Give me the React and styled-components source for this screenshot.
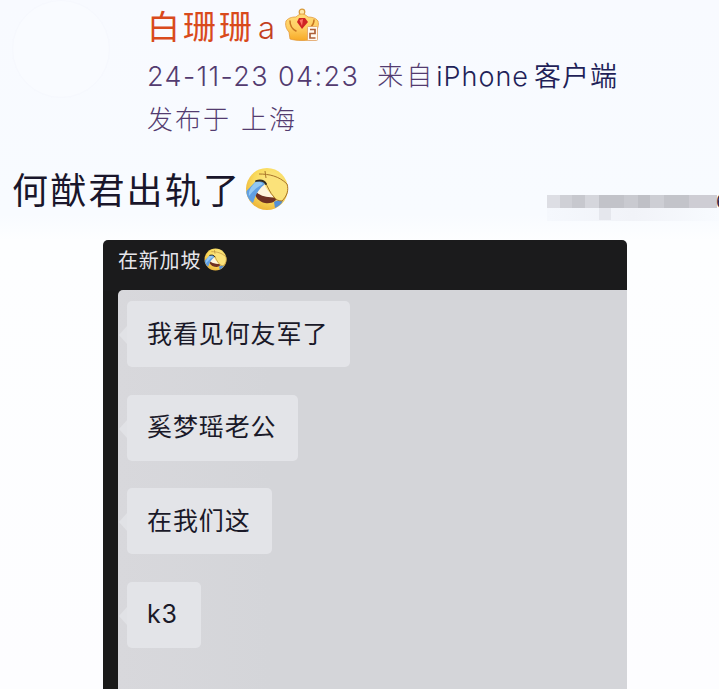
import React from 'react'
import styled, { createGlobalStyle } from 'styled-components'

const GlobalStyle = createGlobalStyle`
  * {
    box-sizing: border-box;
  }

  body {
    margin: 0;
    overflow: hidden;
    background: #fafcff;
    font-family: Inter, "Noto Sans CJK SC", sans-serif;
  }
`

const Page = styled.div`
  width: 719px;
  height: 689px;
  overflow: hidden;
  background: linear-gradient(#f8faff 0, #f8fbff 215px, #fdfeff 240px, #fdfdff 100%);
`

const Header = styled.header`
  display: flex;
  height: 150px;
`

const Avatar = styled.div`
  width: 98px;
  height: 98px;
  margin: 0 37px 0 12px;
  flex: none;
  border-radius: 50%;
  border: 1px solid #f6f8fe;
  background: #f9fbff;
`

const Info = styled.div`
  padding-top: 3px;
`

const Line = styled.div`
  display: flex;
  align-items: center;
  height: ${props => props.$height}px;
  white-space: pre;
`

const Text = styled.span`
  font-size: ${props => props.$size}px;
  line-height: 1;
  font-weight: ${props => props.$weight || 300};
  letter-spacing: ${props => props.$spacing || 0}px;
  color: ${props => props.$color || '#533b70'};
  margin-left: ${props => props.$left || 0}px;
`

const Crown = styled.svg`
  width: 34px;
  height: 34px;
  margin: 0 0 4px 10px;
`

const Post = styled.div`
  display: flex;
  height: 90px;
  padding-left: 12px;
`

const PostText = styled.div`
  display: flex;
  align-items: center;
  height: 80px;
`

const PostLabel = styled(Text)`
  padding-top: 2px;
`

const Laugh = styled.svg`
  width: ${props => props.$size}px;
  height: ${props => props.$size}px;
  margin: 0 0 3px ${props => props.$left}px;
  flex: none;
`

const Watermark = styled.div`
  display: flex;
  align-items: flex-start;
  margin: 45px 0 0 auto;
  height: 26px;
  width: 172px;
  overflow: hidden;
  background: linear-gradient(90deg, #f5f8fd, #f1f3f8 50%, #f8fbff);
`

const Cell = styled.span`
  width: ${props => props.$width}px;
  height: 13px;
  flex: none;
  background: ${props => props.$color};
`

const TallCell = styled(Cell)`
  height: 25px;
  background: linear-gradient(${props => props.$color} 13px, #e5e7ed 13px);
`

const Digit = styled.span`
  flex: none;
  margin-left: -1px;
  font-size: 19px;
  line-height: 14px;
  color: #302a4a;
`

const Chat = styled.section`
  width: 524px;
  height: 449px;
  margin-left: 103px;
  padding-left: 15px;
  border-radius: 5px 5px 0 0;
  background: linear-gradient(#1b1b1c 51px, transparent 51px), linear-gradient(90deg, #1a1a1a 20px, #d5d6da 20px);
`

const ChatTitle = styled.div`
  display: flex;
  align-items: center;
  height: 51px;
  padding-bottom: 9px;
`

const Messages = styled.div`
  display: flex;
  flex-direction: column;
  align-items: flex-start;
  gap: 27.5px;
  height: 399px;
  margin-top: -1px;
  padding: 11px 0 0 9px;
  border-radius: 5px 0 0 0;
  background: linear-gradient(90deg, #d8d8dc, #d4d5d9 30%, #d4d5d9);
`

const Bubble = styled.div`
  position: relative;
  display: flex;
  align-items: center;
  width: ${props => props.$width}px;
  height: 66px;
  padding-left: 20px;
  border-radius: 5px;
  background: #e3e4e8;

  &::before {
    content: '';
    position: absolute;
    left: -8px;
    top: 25px;
    border: solid transparent;
    border-width: 9px 8px 9px 0;
    border-right-color: #e1e2e6;
  }
`

const mosaicLeft = [
  [12.5, '#dddee4'],
  [12.5, '#cfd0d6'],
  [13, '#c7c8ce'],
  [13.5, '#d5d6dc'],
]

const mosaicRight = [
  [13, '#c2c3c9'],
  [13.5, '#c9cad0'],
  [12.5, '#bfc0c6'],
  [14, '#cdced4'],
  [25, '#c3c4ca'],
  [28, '#cecdd4'],
]

const messages = [
  { text: '我看见何友军了', width: 223 },
  { text: '奚梦瑶老公', width: 171 },
  { text: '在我们这', width: 145 },
  { text: 'k3', width: 74 },
]

function RollingLaugh({ size, left }) {
  return (
    <Laugh $size={size} $left={left} viewBox="0 0 44 44">
      <defs>
        <radialGradient id="face" cx="60%" cy="35%" r="65%">
          <stop offset="0" stopColor="#fdec92" />
          <stop offset=".65" stopColor="#f9da5c" />
          <stop offset="1" stopColor="#eeb83c" />
        </radialGradient>
      </defs>
      <circle cx="22" cy="22" r="21" fill="url(#face)" />
      {/* mouth and teeth */}
      <path d="M9 24c7 4 15 6 22 7 1 3-4 6-11 5-6-1-10-6-11-12z" fill="#6f3022" />
      <path d="m10 24 9-7c2 4 5 9 10 13-7 1-14-1-19-6z" fill="#fff4dc" />
      {/* tears */}
      <path d="M11 14c4-1 8 0 9 3-5 4-9 9-12 19C4 33 1 28 1.500 24z" fill="#609fe2" />
      <path d="M11 15c2-1 5 0 7 2-6 3-10 7-14 12-1-5 3-11 7-14z" fill="#93c8f2" />
      <path d="M29 35c3-2 6-2 9-2-1 4-4 6-8 8z" fill="#548fd5" />
      {/* hand */}
      <path d="M20 9c8-2 18 2 22 8 2 6 0 12-5 17-3 0-6-1-8-4-4-4-6-10-9-15z" fill="#fbe27a" />
      <path d="M14 7c10 0 20 2 28 10 2 6 0 12-5 17-3 0-6-1-8-4-4-4-6-10-9-15" fill="none" stroke="#a9752a" strokeWidth="1" />
      <path d="m20 4 1 7" fill="none" stroke="#a9752a" strokeWidth="1" />
      <path d="M11 14c4-1 8-1 10 3" fill="none" stroke="#30291f" strokeWidth="1.800" strokeLinecap="round" />
    </Laugh>
  )
}

function CrownBadge() {
  return (
    <Crown viewBox="0 0 34 34">
      <defs>
        <linearGradient id="gold" x1="0" y1="0" x2="0" y2="1">
          <stop offset="0" stopColor="#ffdc78" />
          <stop offset=".5" stopColor="#ffcf63" />
          <stop offset="1" stopColor="#f7aa25" />
        </linearGradient>
      </defs>
      <circle cx="17" cy="4" r="2.8" fill="#ffe9a8" stroke="#d89a3a" strokeWidth="1.2" />
      <path d="M5 31 4 24C1 21 0 17 1 13c3-4 8-4 10-4 2-2 4-3 6-3s4 1 6 3c4 0 8 1 10 4 1 4 0 8-3 11l-1 7c-7 2-17 2-24 0z" fill="url(#gold)" stroke="#e39a3c" strokeWidth=".8" />
      <path d="M5 13c0 5 2 8 6 10M29 12c0 3-1 5-3 7" fill="none" stroke="#c87722" strokeWidth="1.5" strokeLinecap="round" />
      <path d="M14 10h6l3 4-6 7-5-7z" fill="#cf2424" />
      <path d="m14.500 12 2.500 6 1-7z" fill="#ff7668" />
      <rect x="22.5" y="18.5" width="10" height="14" rx="1" fill="#fffaf2" stroke="#dfa060" strokeWidth=".8" />
      <path d="M25 21.5h5v4h-5v4.500h5.500" fill="none" stroke="#ad6038" strokeWidth="1.7" />
    </Crown>
  )
}

export default function App() {
  return (
    <>
      <GlobalStyle />
      <Page>
        <Header>
          <Avatar />
          <Info>
            <Line $height={48}>
              <Text $size={33} $spacing={3} $weight={400} $color="#d94a1c">白珊珊</Text>
              <Text $size={31} $left={3} $color="#c3401f">a</Text>
              <CrownBadge />
            </Line>
            <Line $height={50}>
              <Text $size={27} $spacing={1.4}>24-11-23 04:23</Text>
              <Text $size={26} $spacing={3} $left={18}>来自</Text>
              <Text $size={27} $spacing={1} $left={1} $color="#221f58">iPhone</Text>
              <Text $size={27} $spacing={1} $left={5} $weight={350} $color="#221f58">客户端</Text>
            </Line>
            <Line $height={37}>
              <Text $size={26} $spacing={2}>发布于</Text>
              <Text $size={26} $spacing={2} $left={10}>上海</Text>
            </Line>
          </Info>
        </Header>
        <Post>
          <PostText>
            <PostLabel $size={36} $spacing={2.2} $weight={400} $color="#19162b">何猷君出轨了</PostLabel>
            <RollingLaugh size={44} left={4} />
          </PostText>
          <Watermark>
            {mosaicLeft.map(([width, color]) => (
              <Cell key={color} $width={width} $color={color} />
            ))}
            <TallCell $width={12.5} $color="#c2c3c9" />
            {mosaicRight.map(([width, color]) => (
              <Cell key={color} $width={width} $color={color} />
            ))}
            <Digit>6</Digit>
          </Watermark>
        </Post>
        <Chat>
          <ChatTitle>
            <Text $size={20} $spacing={0.8} $weight={400} $color="#e6e6eb">在新加坡</Text>
            <RollingLaugh size={23} left={3} />
          </ChatTitle>
          <Messages>
            {messages.map(({ text, width }) => (
              <Bubble key={text} $width={width}>
                <Text $size={25} $spacing={0.9} $weight={400} $color="#1a1928">{text}</Text>
              </Bubble>
            ))}
          </Messages>
        </Chat>
      </Page>
    </>
  )
}
